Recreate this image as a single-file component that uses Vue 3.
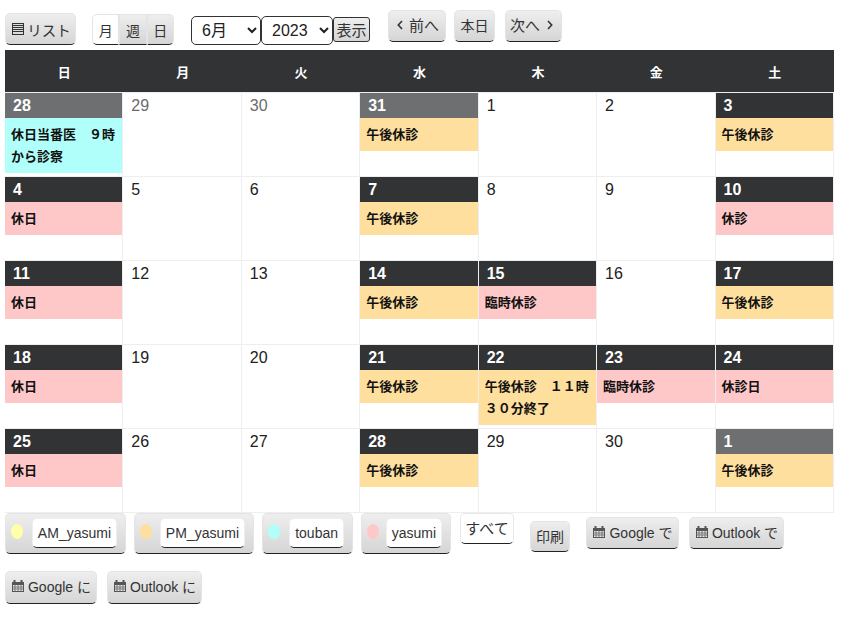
<script setup>
const weekdays = ['日', '月', '火', '水', '木', '金', '土']
const PM = 'pm'
const cells = [
  { d: 28, head: 'muted', ev: '休日当番医　９時から診察', c: 'duty' }, { d: 29, other: true }, { d: 30, other: true },
  { d: 31, head: 'muted', ev: '午後休診', c: PM }, { d: 1 }, { d: 2 }, { d: 3, head: 'dark', ev: '午後休診', c: PM },
  { d: 4, head: 'dark', ev: '休日', c: 'off' }, { d: 5 }, { d: 6 }, { d: 7, head: 'dark', ev: '午後休診', c: PM }, { d: 8 }, { d: 9 },
  { d: 10, head: 'dark', ev: '休診', c: 'off' },
  { d: 11, head: 'dark', ev: '休日', c: 'off' }, { d: 12 }, { d: 13 }, { d: 14, head: 'dark', ev: '午後休診', c: PM },
  { d: 15, head: 'dark', ev: '臨時休診', c: 'off' }, { d: 16 }, { d: 17, head: 'dark', ev: '午後休診', c: PM },
  { d: 18, head: 'dark', ev: '休日', c: 'off' }, { d: 19 }, { d: 20 }, { d: 21, head: 'dark', ev: '午後休診', c: PM },
  { d: 22, head: 'dark', ev: '午後休診　１１時３０分終了', c: PM }, { d: 23, head: 'dark', ev: '臨時休診', c: 'off' },
  { d: 24, head: 'dark', ev: '休診日', c: 'off' },
  { d: 25, head: 'dark', ev: '休日', c: 'off' }, { d: 26 }, { d: 27 }, { d: 28, head: 'dark', ev: '午後休診', c: PM }, { d: 29 }, { d: 30 },
  { d: 1, head: 'muted', ev: '午後休診', c: PM }
]
const legend = [
  { label: 'AM_yasumi', color: '#ffffaa', w: 121 },
  { label: 'PM_yasumi', color: '#ffdf9e', w: 120 },
  { label: 'touban', color: '#b0fffa', w: 91 },
  { label: 'yasumi', color: '#ffc8c8', w: 90 }
]
const calButtons = [
  { label: 'Google で', cls: 'g1' },
  { label: 'Outlook で', cls: 'o1' }
]
const calButtons2 = [
  { label: 'Google に', cls: 'g2' },
  { label: 'Outlook に', cls: 'o2' }
]
</script>

<template>
  <div class="page">
    <div class="toolbar">
      <button class="btn list">
        <svg class="list-icon" viewBox="0 0 12 12" width="12" height="12">
          <rect x=".5" y=".5" width="11" height="11" fill="#ddd" stroke="#333"/>
          <path d="M1 2.500h10M1 4.500h10M1 6.500h10M1 8.500h10" stroke="#333" stroke-width="1"/>
        </svg>リスト
      </button>
      <div class="seg">
        <button class="seg-btn active">月</button>
        <button class="seg-btn">週</button>
        <button class="seg-btn">日</button>
      </div>
      <div class="selects">
        <select class="sel month"><option>6月</option></select>
        <select class="sel year"><option>2023</option></select>
        <button class="show">表示</button>
      </div>
      <div class="nav">
        <button class="btn prev">
          <svg class="chev" viewBox="0 0 6 10" width="6" height="10"><path d="M5 1 1.300 5 5 9" fill="none" stroke="#333" stroke-width="1.600"/></svg>前へ
        </button>
        <button class="btn today">本日</button>
        <button class="btn next">次へ
          <svg class="chev" viewBox="0 0 6 10" width="6" height="10"><path d="M1 1l3.700 4L1 9" fill="none" stroke="#333" stroke-width="1.600"/></svg>
        </button>
      </div>
    </div>

    <div class="calendar">
      <div class="week-head">
        <div v-for="w in weekdays" :key="w" class="wd">{{ w }}</div>
      </div>
      <div class="grid">
        <div v-for="(c, i) in cells" :key="i" class="cell">
          <div v-if="c.head" class="day-head" :class="c.head">{{ c.d }}</div>
          <div v-else class="day-plain" :class="{ other: c.other }">{{ c.d }}</div>
          <div v-if="c.ev" class="event" :class="c.c">{{ c.ev }}</div>
        </div>
      </div>
    </div>

    <div class="footer">
      <div v-for="l in legend" :key="l.label" class="chip" :style="{ width: l.w + 'px' }">
        <span class="dot" :style="{ background: l.color }"></span>
        <span class="chip-label">{{ l.label }}</span>
      </div>
      <button class="all">すべて</button>
      <button class="btn print">印刷</button>
      <button v-for="b in calButtons" :key="b.cls" class="btn cal" :class="b.cls">
        <svg class="cal-icon" viewBox="0 0 12 12" width="12" height="12"><path d="M0 2h12v10H0z" fill="#555"/><path d="M2.500 0v3M9.500 0v3" stroke="#555" stroke-width="2"/><path d="M1 5h10v6H1z" fill="#e2e2e2"/><path d="M3 5v6M6 5v6M9 5v6M1 7h10M1 9h10" stroke="#666" stroke-width=".8"/></svg>{{ b.label }}
      </button>
      <div class="break"></div>
      <button v-for="b in calButtons2" :key="b.cls" class="btn cal" :class="b.cls">
        <svg class="cal-icon" viewBox="0 0 12 12" width="12" height="12"><path d="M0 2h12v10H0z" fill="#555"/><path d="M2.500 0v3M9.500 0v3" stroke="#555" stroke-width="2"/><path d="M1 5h10v6H1z" fill="#e2e2e2"/><path d="M3 5v6M6 5v6M9 5v6M1 7h10M1 9h10" stroke="#666" stroke-width=".8"/></svg>{{ b.label }}
      </button>
    </div>
  </div>
</template>

<style scoped>
.page {
  width: 853px;
  height: 620px;
  box-sizing: border-box;
  padding: 0 19px 0 5px;
  background: #fff;
  overflow: hidden;
  font-family: Arial, "Liberation Sans", "Noto Sans CJK JP", sans-serif;
  color: #212121;
}
button { font-family: inherit; cursor: pointer; padding: 0; margin: 0; }
.toolbar {
  height: 50px;
  display: flex;
  align-items: flex-start;
}
.btn {
  display: inline-flex;
  align-items: center;
  justify-content: center;
  box-sizing: border-box;
  height: 32px;
  border: 1px solid #e4e4e4;
  border-bottom: 1px solid #222;
  border-radius: 5px;
  background: linear-gradient(#eeeeee, #d5d5d5);
  color: #333;
  font-size: 14px;
  white-space: nowrap;
}
.list { width: 71px; margin-top: 13px; font-size: 14.5px; padding-left: 2px; }
.list-icon { margin-right: 3px; }
.seg { display: flex; margin: 14px 0 0 16px; width: 82px; height: 31px; }
.seg-btn {
  flex: 1;
  box-sizing: border-box;
  height: 31px;
  font-size: 14px;
  color: #333;
  border: 1px solid #e4e4e4;
  border-bottom: 1px solid #222;
  background: linear-gradient(#eeeeee, #d5d5d5);
}
.seg-btn:first-child { border-radius: 5px 0 0 5px; }
.seg-btn:last-child { border-radius: 0 5px 5px 0; }
.seg-btn.active { background: #fff; }
.selects { display: flex; align-items: flex-start; margin: 16px 0 0 17px; }
.sel {
  box-sizing: border-box;
  height: 29px;
  border: 1px solid #333;
  border-radius: 5px;
  background: #fff;
  color: #212121;
  font-family: inherit;
  font-size: 16px;
  padding: 0 0 0 6px;
}
.month { width: 70px; }
.year { width: 72px; }
.show {
  box-sizing: border-box;
  width: 37px;
  height: 25px;
  margin-top: 1px;
  padding-bottom: 1px;
  font-size: 15px;
  color: #333;
  border: 1px solid #333;
  border-radius: 3px;
  background: linear-gradient(#eeeeee, #d5d5d5);
}
.nav { display: flex; margin: 10px 0 0 18px; }
.nav .btn { padding-bottom: 3px; }
.prev { width: 58px; padding-left: 2px; font-size: 15px; }
.today { width: 41px; margin-left: 8px; }
.next { width: 57px; margin-left: 10px; padding-right: 4px; font-size: 15px; }
.prev .chev { margin-right: 6px; }
.next .chev { margin-left: 7px; }

.calendar { width: 829px; }
.week-head {
  display: grid;
  grid-template-columns: repeat(7, 1fr);
  height: 42px;
  background: #323335;
}
.wd {
  display: flex;
  align-items: center;
  justify-content: center;
  color: #fff;
  font-size: 13px;
  font-weight: 700;
}
.grid {
  display: grid;
  grid-template-columns: 117.3px repeat(6, 1fr);
  grid-auto-rows: 84px;
  border-right: 1px solid #eee;
  border-bottom: 1px solid #eee;
  box-sizing: border-box;
  height: 421px;
}
.cell {
  box-sizing: border-box;
  border-left: 1px solid #eee;
  border-top: 1px solid #eee;
  min-width: 0;
}
.cell:nth-child(7n+1) { border-left: 0; }
.day-head {
  height: 25px;
  padding-left: 8px;
  color: #fff;
  font-size: 16px;
  font-weight: 700;
  line-height: 25px;
}
.day-head.dark { background: #323335; }
.day-head.muted { background: #6e6f71; }
.day-plain {
  height: 25px;
  padding-left: 8px;
  font-size: 16px;
  line-height: 25px;
  color: #212121;
}
.day-plain.other { color: #6b6b6b; }
.event {
  padding: 5.5px 6px;
  font-size: 13px;
  font-weight: 700;
  line-height: 22px;
  color: #111;
}
.event.pm { background: #ffdf9e; }
.event.off { background: #ffc8c8; }
.event.duty { background: #b0fffa; }

.footer {
  display: flex;
  flex-wrap: wrap;
  align-items: flex-start;
  width: 829px;
}
.chip {
  display: flex;
  align-items: flex-start;
  justify-content: space-between;
  box-sizing: border-box;
  height: 41px;
  padding: 4px 8px 3px 5px;
  margin-right: 8px;
  border: 1px solid #e4e4e4;
  border-bottom: 1px solid #222;
  border-radius: 5px;
  background: linear-gradient(#eeeeee, #d5d5d5);
}
.dot {
  width: 12px;
  height: 15px;
  margin-top: 6px;
  border-radius: 50%;
}
.chip-label {
  box-sizing: border-box;
  display: block;
  height: 30px;
  line-height: 29px;
  padding: 0 5px;
  background: #fff;
  border: 1px solid #eee;
  border-bottom: 1px solid #222;
  border-radius: 5px;
  font-size: 14px;
  color: #333;
}
.all {
  box-sizing: border-box;
  width: 54px;
  height: 31px;
  margin-left: 1px;
  padding-bottom: 3px;
  font-size: 15px;
  color: #333;
  background: #fff;
  border: 1px solid #e8e8e8;
  border-bottom: 1px solid #222;
  border-radius: 5px;
}
.print { width: 40px; height: 31px; margin: 8px 0 0 16px; padding-bottom: 1px; }
.cal { padding-bottom: 3px; padding-left: 1px; }
.cal-icon { margin-right: 4px; }
.g1 { width: 93px; margin: 4px 0 0 16px; }
.o1 { width: 95px; margin: 4px 0 0 10px; }
.break { flex-basis: 100%; height: 17px; }
.g2 { width: 92px; height: 33px; }
.o2 { width: 95px; height: 33px; margin-left: 10px; }
</style>
